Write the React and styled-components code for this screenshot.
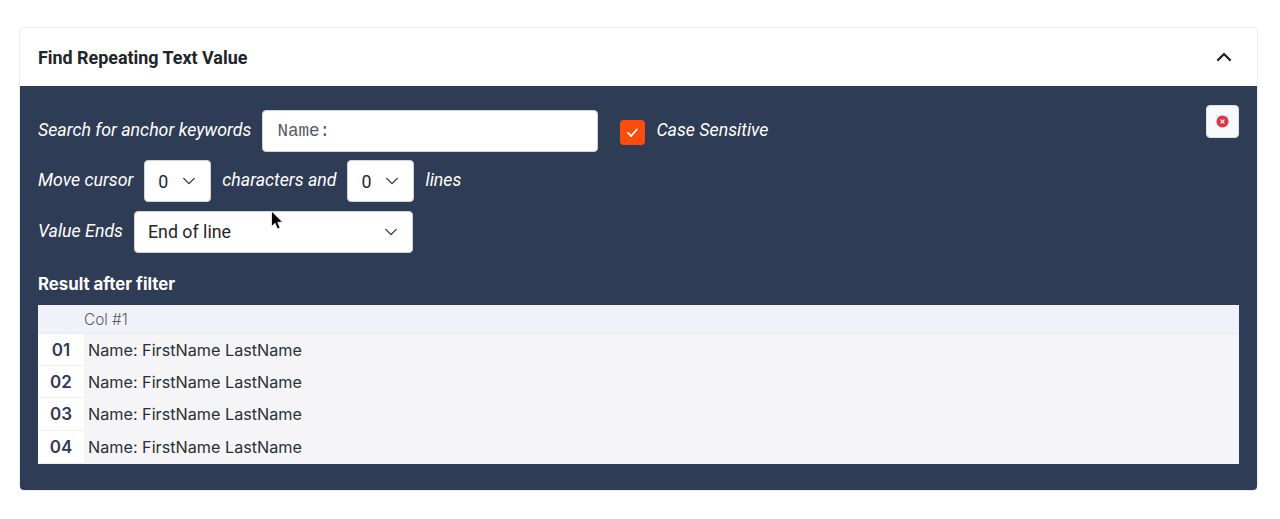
import React from "react";
import styled, { createGlobalStyle } from "styled-components";

const GlobalStyle = createGlobalStyle`
  html, body {
    margin: 0;
    padding: 0;
    background: #fff;
  }
`;

const Page = styled.div`
  position: relative;
  height: 519px;
  overflow: hidden;
  padding: 27px 22px 0 19px;
  box-sizing: border-box;
  font-family: Roboto, "Liberation Sans", sans-serif;
`;

const Card = styled.section`
  height: 464px;
  box-sizing: border-box;
  display: flex;
  flex-direction: column;
  border: 1px solid #ebedf0;
  border-radius: 5px;
  overflow: hidden;
`;

const Header = styled.header`
  height: 58px;
  flex: none;
  display: flex;
  align-items: center;
  justify-content: space-between;
  padding: 0 25px 0 18px;
`;

const Title = styled.h2`
  margin: 0;
  font-size: 17.9px;
  font-weight: 700;
  color: #212529;
`;

const Body = styled.div`
  flex: 1;
  background: #2e3c56;
  padding: 19px 18px 0;
`;

const Top = styled.div`
  display: flex;
  justify-content: space-between;
  align-items: flex-start;
`;

const Form = styled.div`
  padding-top: 5px;
  display: flex;
  flex-direction: column;
  gap: 8.4px;
`;

const Row = styled.div`
  display: flex;
  align-items: center;
  height: 42px;
`;

const Label = styled.span`
  font-style: italic;
  font-size: 17.75px;
  color: #fff;
  padding-bottom: 2px;
  margin-right: 11px;
`;

const TextBox = styled.div`
  width: 336px;
  height: 42px;
  box-sizing: border-box;
  display: flex;
  align-items: center;
  padding-left: 14px;
  background: #fff;
  border: 1px solid #ced4da;
  border-radius: 4px;
  font-family: "Liberation Mono", monospace;
  font-size: 17.6px;
  color: #555b61;
`;

const Check = styled.span`
  width: 25px;
  height: 25px;
  margin: 2px 11px 0 22px;
  display: flex;
  align-items: center;
  justify-content: center;
  background: #fd4d0c;
  border-radius: 4px;
`;

const Select = styled.div`
  width: ${(p) => p.$width}px;
  height: 42px;
  box-sizing: border-box;
  margin-right: 11px;
  display: flex;
  align-items: center;
  justify-content: space-between;
  padding: 0 14px 0 13px;
  background: #fff;
  border: 1px solid #ced4da;
  border-radius: 4px;
  font-size: 17.8px;
  color: #212529;
`;

const CloseButton = styled.button`
  width: 33px;
  height: 33px;
  padding: 0;
  display: flex;
  align-items: center;
  justify-content: center;
  background: #f8f9fb;
  border: 1px solid #dee2e6;
  border-radius: 4px;
`;

const SectionTitle = styled.h3`
  margin: 22px 0 11px;
  font-family: Inter, "Liberation Sans", sans-serif;
  font-size: 16.8px;
  line-height: 19px;
  font-weight: 700;
  color: #fff;
`;

const Table = styled.div`
  background: #f5f5f8;
  font-family: Inter, "Liberation Sans", sans-serif;
`;

const TableHead = styled.div`
  height: 29px;
  display: flex;
  align-items: center;
  padding: 2px 0 0 46px;
  font-size: 15.3px;
  font-weight: 300;
  color: #555a63;
  background: #f1f2f9;
  border-bottom: 1px solid #e9ebf2;
  box-sizing: border-box;
`;

const TableRow = styled.div`
  height: ${(p) => (p.$tall ? 33 : 32)}px;
  display: flex;
  align-items: center;
  font-size: 16.2px;
  color: #2b2f36;
`;

const RowNumber = styled.div`
  width: 46px;
  height: 100%;
  flex: none;
  box-sizing: border-box;
  display: flex;
  align-items: center;
  justify-content: center;
  padding-top: 1px;
  background: #fff;
  border-bottom: 1px solid #eef0f4;
  font-size: 17px;
  font-weight: 600;
  color: #2e3c56;
`;

const Cell = styled.div`
  padding-left: 4px;
`;

const Pointer = styled.svg`
  position: absolute;
  left: 270px;
  top: 210px;
`;

const Chevron = ({ size = 14, weight = 1.6, up, color = "#343a40" }) => (
  <svg width={size} height={size} viewBox="0 0 16 16" fill="none">
    <path
      d={up ? "M2 11l6-6 6 6" : "M2 5l6 6 6-6"}
      stroke={color}
      strokeWidth={weight}
      strokeLinecap="round"
      strokeLinejoin="round"
    />
  </svg>
);

const rows = ["01", "02", "03", "04"];

export default function App() {
  return (
    <>
      <GlobalStyle />
      <Page>
        <Card>
          <Header>
            <Title>Find Repeating Text Value</Title>
            <Chevron size={16} weight={2.4} up color="#212529" />
          </Header>
          <Body>
            <Top>
              <Form>
                <Row>
                  <Label>Search for anchor keywords</Label>
                  <TextBox>Name:</TextBox>
                  <Check>
                    <svg width="13" height="13" viewBox="0 0 16 16" fill="none">
                      <path
                        d="M2.5 8.5l3.8 3.8 7-8"
                        stroke="#fff"
                        strokeWidth="2.2"
                        strokeLinecap="round"
                        strokeLinejoin="round"
                      />
                    </svg>
                  </Check>
                  <Label>Case Sensitive</Label>
                </Row>
                <Row>
                  <Label>Move cursor</Label>
                  <Select $width={67}>
                    0 <Chevron />
                  </Select>
                  <Label>characters and</Label>
                  <Select $width={67}>
                    0 <Chevron />
                  </Select>
                  <Label>lines</Label>
                </Row>
                <Row>
                  <Label>Value Ends</Label>
                  <Select $width={279}>
                    End of line <Chevron />
                  </Select>
                </Row>
              </Form>
              <CloseButton aria-label="Remove">
                <svg width="13" height="13" viewBox="0 0 14 14">
                  <circle cx="7" cy="7" r="6.5" fill="#dc3545" />
                  <path d="M5 5l4 4M9 5l-4 4" stroke="#fff" strokeWidth="1.4" />
                </svg>
              </CloseButton>
            </Top>
            <SectionTitle>Result after filter</SectionTitle>
            <Table>
              <TableHead>Col #1</TableHead>
              {rows.map((n, i) => (
                <TableRow key={n} $tall={i >= 2}>
                  <RowNumber>{n}</RowNumber>
                  <Cell>Name: FirstName LastName</Cell>
                </TableRow>
              ))}
            </Table>
          </Body>
        </Card>
        <Pointer width="14" height="22" viewBox="0 0 14 22">
          <path
            d="M1.5 1v15.5l3.6-3.2 2.4 5.6 2.6-1.1-2.4-5.4 4.8-.3z"
            fill="#000"
            stroke="#fff"
            strokeWidth="0.8"
          />
        </Pointer>
      </Page>
    </>
  );
}
